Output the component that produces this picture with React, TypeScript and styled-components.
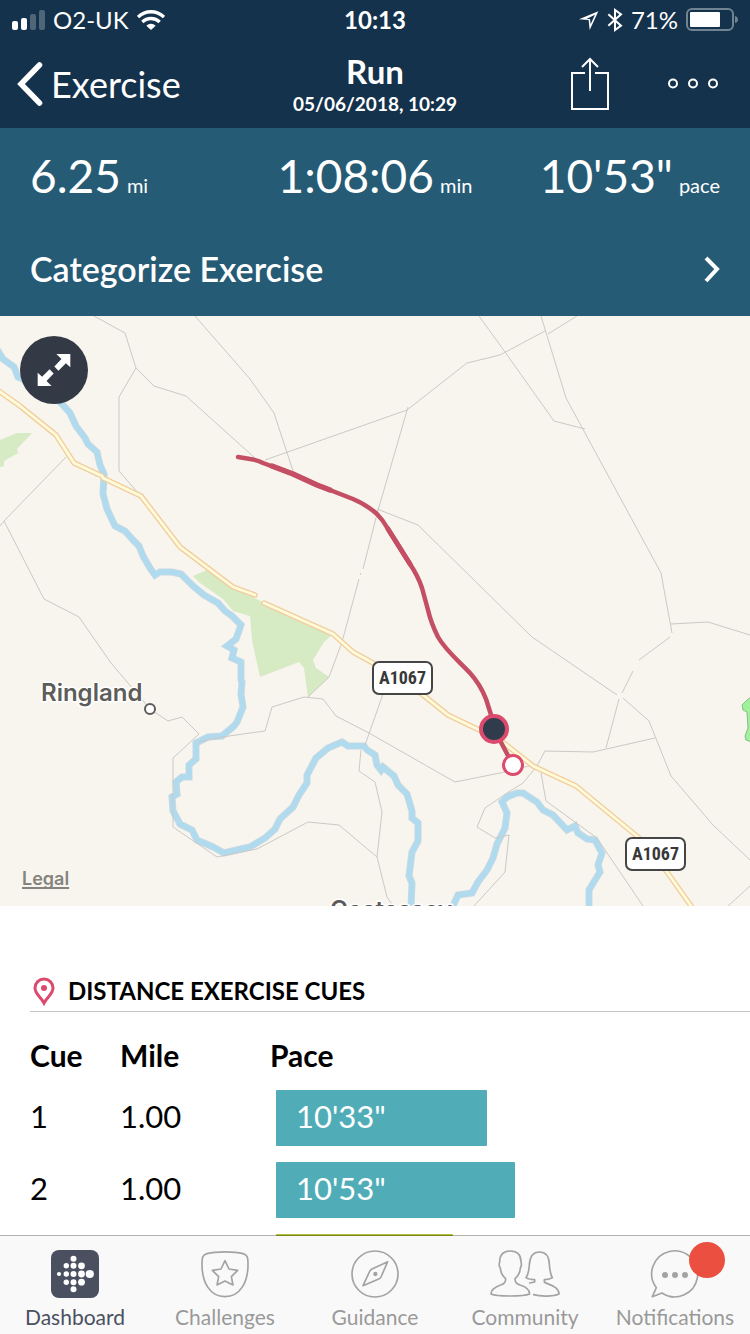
import React from "react";
import styled, { createGlobalStyle } from "styled-components";

const GlobalStyle = createGlobalStyle`
  *, *::before, *::after { box-sizing: border-box; }
  body {
    margin: 0;
    background: #fff;
    font-family: Lato, "Open Sans", sans-serif;
    color: #000;
  }
  button { font: inherit; color: inherit; background: none; border: 0; padding: 0; cursor: pointer; }
  svg { display: block; flex: none; }
`;

const Screen = styled.div`
  height: 100vh;
  display: flex;
  flex-direction: column;
  overflow: hidden;
`;

const TopBar = styled.header`
  background: #14324b;
  color: #fff;
  flex: none;
`;

const StatusBar = styled.div`
  display: grid;
  grid-template-columns: 1fr auto 1fr;
  align-items: center;
  height: 40px;
  padding: 0 12px;
  font-size: 24px;
  line-height: 40px;
`;

const StatusGroup = styled.div<{ $end?: boolean }>`
  display: flex;
  align-items: center;
  justify-content: ${(p) => (p.$end ? "flex-end" : "flex-start")};
  gap: 8px;
`;

const Clock = styled.time`
  font-weight: 700;
`;

const NavBar = styled.div`
  display: grid;
  grid-template-columns: 1fr auto 1fr;
  align-items: center;
  height: 88px;
  padding: 0 30px 0 16px;
`;

const BackButton = styled.button`
  display: flex;
  align-items: center;
  justify-self: start;
  gap: 8px;
  font-size: 36px;
  line-height: 44px;
`;

const TitleBlock = styled.div`
  text-align: center;
  margin-left: 14px;
`;

const Title = styled.h1`
  margin: 0;
  font-size: 33px;
  line-height: 40px;
  font-weight: 700;
`;

const Subtitle = styled.div`
  font-size: 19px;
  line-height: 26px;
  font-weight: 700;
`;

const NavActions = styled.div`
  display: flex;
  align-items: center;
  justify-content: flex-end;
  gap: 58px;
`;

const IconButton = styled.button`
  display: flex;
`;

const Summary = styled.section`
  flex: none;
  background: #265b75;
  color: #fff;
  padding: 18px 30px 0;
  height: 188px;
`;

const Stats = styled.div`
  display: grid;
  grid-template-columns: 1fr auto 1fr;
`;

const Stat = styled.div`
  display: flex;
  align-items: baseline;
  gap: 6px;
  line-height: 60px;

  &:last-child {
    justify-content: flex-end;
  }
`;

const StatValue = styled.span`
  font-size: 46px;
`;

const StatUnit = styled.span`
  font-size: 20px;
`;

const CategorizeButton = styled.button`
  display: flex;
  align-items: center;
  justify-content: space-between;
  width: 100%;
  margin-top: 32px;
  font-size: 34px;
  line-height: 44px;
  font-weight: 600;
`;

const Scroller = styled.main`
  flex: 1;
  min-height: 0;
  margin-bottom: -1px;
  overflow-y: auto;
  scrollbar-width: none;
`;

const MapPanel = styled.section`
  position: relative;
  height: 590px;
  background: #f8f5ee;
  overflow: hidden;
`;

const ExpandButton = styled.button`
  position: absolute;
  left: 20px;
  top: 20px;
  width: 68px;
  height: 68px;
  border-radius: 50%;
  background: #343a45;
  display: flex;
  align-items: center;
  justify-content: center;
`;

const LegalLink = styled.a`
  position: absolute;
  left: 22px;
  bottom: 14px;
  font-family: Inter, sans-serif;
  font-size: 18px;
  line-height: 26px;
  font-weight: 600;
  color: #85837e;
  text-decoration-thickness: 2px;
  text-decoration-skip-ink: none;
  text-underline-offset: 2px;
`;

const Cues = styled.section`
  padding: 65px 0 0 30px;
`;

const CuesTitle = styled.h2`
  display: flex;
  align-items: center;
  gap: 10px;
  margin: 0;
  height: 41px;
  border-bottom: 1px solid #c4c4c4;
  font-size: 24px;
  line-height: 40px;
  font-weight: 700;
`;

const CueTable = styled.table`
  width: 100%;
  border-collapse: collapse;
  table-layout: fixed;
`;

const HeadCell = styled.th<{ $width?: number }>`
  width: ${(p) => (p.$width ? `${p.$width}px` : "auto")};
  height: 70px;
  padding: 18px 0 2px;
  text-align: left;
  font-size: 30px;
  line-height: 50px;
  font-weight: 700;
`;

const Cell = styled.td`
  height: 72px;
  padding: 0 0 4px;
  font-size: 31px;
`;

const PaceCell = styled(Cell)`
  padding: 0 30px 0 6px;
`;

const PaceBar = styled.div<{ $color: string }>`
  height: 56px;
  padding-left: 20px;
  border-radius: 1px;
  background: ${(p) => p.$color};
  color: #fff;
  line-height: 52px;
`;

const TabBar = styled.nav`
  position: relative;
  flex: none;
  display: grid;
  grid-template-columns: repeat(5, 1fr);
  height: 99px;
  border-top: 1px solid rgba(0, 0, 0, 0.3);
  background: #f9f9f9;
  background-clip: padding-box;
`;

const Tab = styled.button<{ $active?: boolean }>`
  display: flex;
  flex-direction: column;
  align-items: center;
  gap: 4px;
  padding-top: 14px;
  font-size: 21px;
  line-height: 30px;
  color: ${(p) => (p.$active ? "#4a5060" : "#999")};
`;

const TabIcon = styled.span`
  position: relative;
  display: block;
`;

const Badge = styled.span`
  position: absolute;
  left: 38px;
  top: -8px;
  width: 36px;
  height: 36px;
  border-radius: 50%;
  background: #eb4f3f;
`;

const SignalIcon = () => (
  <svg width="33" height="20" fill="#fff" aria-hidden="true">
    <rect x="0" y="11" width="6" height="9" rx="2" />
    <rect x="9" y="8" width="6" height="12" rx="2" />
    <rect x="18" y="4" width="6" height="16" rx="2" opacity="0.25" />
    <rect x="27" y="0" width="6" height="20" rx="2" opacity="0.25" />
  </svg>
);

const WifiIcon = () => (
  <svg width="28" height="20" viewBox="0 0 84 60" fill="none" stroke="#fff" strokeWidth="10" aria-hidden="true">
    <path d="M3 21 C25 0 59 0 81 21" />
    <path d="M16 36 C30 22 54 22 68 36" />
    <path d="M28 47 C36 39 48 39 56 47 L42 60 Z" fill="#fff" stroke="none" />
  </svg>
);

const LocationIcon = () => (
  <svg width="20" height="20" viewBox="0 0 60 60" fill="#fff" fillRule="evenodd" aria-hidden="true">
    <path d="M0 28 L58 4 L32 60 L29 30 Z M22 27 L33 27 L35 43 L48 14 Z" />
  </svg>
);

const BluetoothIcon = () => (
  <svg width="16" height="24" viewBox="0 0 48 72" fill="none" stroke="#fff" strokeWidth="6" aria-hidden="true">
    <path d="M4 19 L42 53 L24 66 V6 L42 19 L4 53" />
  </svg>
);

const BatteryIcon = () => (
  <svg width="52" height="24" aria-hidden="true">
    <rect x="1" y="1" width="46" height="21" rx="5" fill="none" stroke="#718492" strokeWidth="2" />
    <rect x="4" y="4" width="30" height="15" rx="1" fill="#fff" />
    <path d="M49 8 C53 9 53 14 49 15 Z" fill="#718492" />
  </svg>
);

const BackChevron = () => (
  <svg width="27" height="44" fill="none" stroke="#fff" strokeWidth="5.5" strokeLinecap="round" aria-hidden="true">
    <path d="M23.500 3 L5 22 L23.500 41" />
  </svg>
);

const ShareIcon = () => (
  <svg width="38" height="54" fill="none" stroke="#fff" strokeWidth="2" aria-hidden="true">
    <path d="M14 16 H1 V52 H37 V16 H24" />
    <path d="M19 34 V2 M11 10 L19 2 L27 10" />
  </svg>
);

const MoreIcon = () => (
  <svg width="53" height="12" fill="none" stroke="#fff" strokeWidth="2" aria-hidden="true">
    <circle cx="6" cy="5.500" r="4" />
    <circle cx="26" cy="5.500" r="4" />
    <circle cx="46" cy="5.500" r="4" />
  </svg>
);

const ForwardChevron = () => (
  <svg width="17" height="28" fill="none" stroke="#fff" strokeWidth="4" aria-hidden="true">
    <path d="M3 3 L14 14 L3 26" />
  </svg>
);

const ExpandIcon = () => (
  <svg width="34" height="34" viewBox="0 0 100 100" fill="#fff" aria-hidden="true">
    <path d="M57 3 H98 V42 L85 30 L63 52 L51 40 L72 18 Z" />
    <path d="M43 97 H2 V58 L15 70 L37 48 L49 60 L28 82 Z" />
  </svg>
);

const PinIcon = () => (
  <svg width="28" height="30" fill="none" stroke="#dc4a6d" strokeWidth="3" aria-hidden="true">
    <path d="M14 27 C11 21 5 18 5 12 A9 9 0 0 1 23 12 C23 18 17 21 14 27 Z" />
    <circle cx="14" cy="12" r="3" fill="#dc4a6d" stroke="none" />
  </svg>
);

const DashboardIcon = () => (
  <svg width="48" height="48" fill="#fff" aria-hidden="true">
    <rect width="48" height="48" rx="8" fill="#4a5060" />
    <circle cx="8" cy="24" r="2.1" />
    {[15.8, 24, 32.2].map((y) => (
      <circle key={y} cx="15.3" cy={y} r="2.7" />
    ))}
    {[8.8, 15.8, 24, 32.2, 39.2].map((y) => (
      <circle key={y} cx="22.5" cy={y} r="3" />
    ))}
    {[15.8, 24, 32.2].map((y) => (
      <circle key={y} cx="30.5" cy={y} r="3.4" />
    ))}
    <circle cx="38.800" cy="24" r="4.1" />
  </svg>
);

const LineIcon = styled.svg.attrs({ "aria-hidden": true })`
  fill: none;
  stroke: #a3a3a3;
  stroke-width: 5;
  stroke-linejoin: round;
  stroke-linecap: round;
  overflow: visible;
`;

const ChallengesIcon = () => (
  <LineIcon width="48" height="48" viewBox="0 0 144 144">
    <path d="M3 44 C3 20 5 15 18 11 C44 4 100 4 126 11 C139 15 141 20 141 44 C141 96 118 140 72 140 C26 140 3 96 3 44 Z" />
    <path d="M72 32 L84 57 L110 61 L91 80 L96 105 L72 93 L48 105 L53 80 L34 61 L60 57 Z" />
  </LineIcon>
);

const GuidanceIcon = () => (
  <LineIcon width="48" height="48" viewBox="0 0 144 144">
    <circle cx="72" cy="72" r="69" />
    <path d="M36 107 L56 64 Q58 60 63 57 L110 35 L90 81 Q88 85 83 87 Z" />
    <circle cx="73" cy="72" r="4" fill="#a3a3a3" />
  </LineIcon>
);

const CommunityIcon = () => (
  <LineIcon width="70" height="48" viewBox="0 0 210 144">
    <path d="M3 132 C3 118 18 110 32 105 C42 101 47 98 47 86 C37 78 32 68 31 54 C26 48 27 42 29 36 C29 14 40 3 61 3 C82 3 93 14 93 36 C95 42 95 48 91 54 C90 68 85 78 75 86 C75 98 80 101 90 105 C106 110 119 118 119 132 C100 140 20 140 3 132 Z" />
    <path d="M119 99 L134 96 V89 C124 89 114 87 108 83 C116 73 117 60 118 44 C120 16 132 6 148 6 C166 6 177 18 178 42 C179 60 182 74 187 83 C180 87 172 89 163 89 V96 C170 102 184 104 192 110 C203 116 207 124 207 132 C190 140 150 140 131 134" />
  </LineIcon>
);

const NotificationsIcon = () => (
  <LineIcon width="48" height="48" viewBox="0 0 144 144">
    <path d="M33 129 L4 140 L16 113 A69 69 0 1 1 33 129 Z" />
    <g fill="#a3a3a3" stroke="none">
      <circle cx="42" cy="75" r="9" />
      <circle cx="72" cy="75" r="9" />
      <circle cx="102" cy="75" r="9" />
    </g>
  </LineIcon>
);

const RIVERS = [
  "M-4 32 L0 38 L3 43 L14 51 L18 61 L40 70 L62 88 L70 97 L76 110 L85 122 L88 128 L97 136 L100 149 L104 158 L103 178 L107 193 L115 210 L125 215 L134 225 L139 230 L143 240 L150 252 L155 259 L160 256 L172 256 L181 258 L193 270 L204 279 L218 287 L225 295 L232 300 L241 309 L236 323 L227 330 L234 334 L232 342 L241 346 L241 364 L242 366 L241 378 L243 391 L237 406 L234 410 L222 420 L208 421 L196 427 L196 443 L189 449 L189 461 L182 461 L176 466 L177 478 L172 481 L173 495 L180 508 L192 514 L197 524 L213 531 L224 537 L241 533 L250 531 L265 522 L275 513 L280 503 L293 491 L299 479 L307 467 L307 459 L316 442 L328 432 L342 426 L348 430 L364 430 L367 434 L375 439 L377 449 L381 454 L383 451 L394 460 L398 469 L407 478 L412 495 L412 502 L418 507 L418 525 L412 536 L409 560 L412 567 L411 592",
  "M452 592 L458 579 L472 577 L478 566 L487 554 L493 542 L497 528 L505 512 L507 497 L502 486 L507 481 L517 477 L523 477 L537 486 L543 494 L553 499 L567 514 L575 510 L578 517 L587 523 L595 524 L602 537 L598 549 L600 556 L595 564 L589 574 L589 592",
];

const MINOR_ROADS = [
  "M94 0 L125 17 L136 52 L154 70 L186 80 L256 143",
  "M136 52 L119 81 V155 L139 178",
  "M195 0 L250 63 L274 97 L293 155",
  "M66 141 L4 205 L0 210",
  "M4 205 L44 283 L79 301 L111 347 L150 393 L168 405 L182 401 L199 418 L173 442 V511 L217 541 L257 533 L308 506 L339 509 L377 541 L387 581 L393 590",
  "M377 541 L382 496 L375 466 L359 455 L361 434",
  "M199 426 L222 421 L250 417 L265 415 L272 391 L304 381 L323 383 L336 400 L369 417 L455 466 L500 457 L533 449",
  "M308 381 L329 361 L342 326 L359 263",
  "M360 259 L361 257",
  "M363 253 L377 198 L408 91",
  "M383 378 L365 429",
  "M265 144 L407 94 L467 47 L500 39 L545 15",
  "M548 18 L577 0",
  "M479 0 L500 29 L554 105 L585 113",
  "M541 0 L566 82 L661 257 L672 317",
  "M671 308 L708 306 L750 319",
  "M670 321 L639 344",
  "M633 355 L622 377",
  "M617 379 L532 321 L418 209 L377 193",
  "M623 382 L649 405 L671 460 L713 509 L750 544",
  "M619 383 L606 432",
  "M655 422 L593 436 L545 435 L537 450 L523 467 L507 477 L485 492 L477 511 L495 522 L509 519 L505 556 L474 590",
  "M541 457 L546 485 L597 522 L643 590",
  "M728 590 L750 570",
];

const PARKS = [
  "M0 124 L17 117 L32 117 L17 133 L18 137 L4 145 L4 150 L0 151 Z",
  "M193 260 L207 254 L233 271 L264 287 L333 318 L324 326 L313 344 L316 352 L329 361 L308 381 L304 352 L299 346 L260 361 L252 324 L250 300 L233 295 L223 283 L200 267 Z",
];

const MAIN_ROADS = [
  "M-4 73 L20 90 L56 119 L74 147 L102 160 L103 162 L141 180 L180 231 L233 271 L255 279",
  "M264 287 L333 318 L353 336 L373 347 L423 379 L448 399 L500 424 L533 450 L576 470 L638 521 L667 556 L694 594",
];

const RoadShield = ({ x, y, name }: { x: number; y: number; name: string }) => (
  <g transform={`translate(${x} ${y})`}>
    <rect x="1" y="1" width="59" height="32" rx="6" fill="#fff" stroke="#454545" strokeWidth="2" />
    <text
      x="30.5"
      y="23"
      textAnchor="middle"
      fontFamily='"Liberation Sans Narrow", "Roboto Condensed", Roboto, sans-serif'
      fontSize="18"
      fontWeight="700"
      fill="#383838"
    >
      {name}
    </text>
  </g>
);

const PlaceName = styled.text`
  font-family: Inter, sans-serif;
  font-size: 24px;
  font-weight: 600;
  fill: #5d5c59;
  stroke: #fff;
  stroke-width: 3px;
  stroke-linejoin: round;
  paint-order: stroke;
`;

const RouteMap = () => (
  <svg width="100%" height="100%" viewBox="0 0 750 590" preserveAspectRatio="xMidYMid slice" role="img" aria-label="Route map">
    {PARKS.map((d) => (
      <path key={d} d={d} fill="#d6eac4" />
    ))}
    <path d="M752 380 L746 385 L742 389 L743 394 L747 396 L748 412 L745 420 L746 424 L752 426 Z" fill="#a0f09c" stroke="#7fc282" />
    <g fill="none" strokeLinejoin="miter">
      {RIVERS.map((d) => (
        <g key={d}>
          <path d={d} stroke="#c3d9e6" strokeWidth="7" />
          <path d={d} stroke="#b0daed" strokeWidth="5" />
        </g>
      ))}
      {MINOR_ROADS.map((d) => (
        <path key={d} d={d} stroke="#cbc9c5" strokeWidth="1" />
      ))}
      <g strokeLinecap="round" strokeLinejoin="round">
        {MAIN_ROADS.map((d) => (
          <g key={d}>
            <path d={d} stroke="#f1ce9e" strokeWidth="5.500" />
            <path d={d} stroke="#fffbdb" strokeWidth="2.800" />
          </g>
        ))}
      </g>
    </g>
    <RoadShield x={372} y={345} name="A1067" />
    <RoadShield x={625} y={521} name="A1067" />
    <PlaceName x="41" y="385">Ringland</PlaceName>
    <PlaceName x="330" y="602">Costessey</PlaceName>
    <circle cx="150" cy="393" r="5" fill="#fff" stroke="#5d5c59" strokeWidth="2" />
    <g fill="none" stroke="#c44e63" strokeLinecap="round" strokeLinejoin="round">
      <path
        strokeWidth="4.500"
        d="M238 141 L250 143 Q257 144 263 147 L293 158 L317 169 L353 183 Q367 189 377 198 Q383 204 388 213 L410 248 Q418 260 422 272 L428 294 Q431 307 438 321 C446 335 460 346 470 357 Q480 368 486 383 L492 402 L494 413 L513 449"
      />
      <path strokeWidth="5.500" d="M272 150 L293 158 L317 169 L330 174" />
      <path strokeWidth="5" d="M388 213 L410 248" />
    </g>
    <circle cx="494" cy="413" r="13" fill="#303c4c" stroke="#dc4a6d" strokeWidth="4" />
    <circle cx="513" cy="449" r="9.500" fill="#fff" stroke="#dc4a6d" strokeWidth="3" />
  </svg>
);

type Cue = { id: number; mile?: string; pace?: string; share: number; color: string };

const CUES: Cue[] = [
  { id: 1, mile: "1.00", pace: "10'33\"", share: 47.5, color: "#50adb8" },
  { id: 2, mile: "1.00", pace: "10'53\"", share: 53.8, color: "#50adb8" },
  { id: 3, share: 39.9, color: "#b2bf33" },
];

const TABS = [
  { label: "Dashboard", icon: <DashboardIcon />, active: true },
  { label: "Challenges", icon: <ChallengesIcon /> },
  { label: "Guidance", icon: <GuidanceIcon /> },
  { label: "Community", icon: <CommunityIcon /> },
  { label: "Notifications", icon: <NotificationsIcon />, badge: true },
];

const STATS = [
  { value: "6.25", unit: "mi" },
  { value: "1:08:06", unit: "min" },
  { value: "10'53\"", unit: "pace" },
];

export default function App() {
  return (
    <Screen>
      <GlobalStyle />
      <TopBar>
        <StatusBar>
          <StatusGroup>
            <SignalIcon />
            <span>O2-UK</span>
            <WifiIcon />
          </StatusGroup>
          <Clock>10:13</Clock>
          <StatusGroup $end>
            <LocationIcon />
            <BluetoothIcon />
            <span>71%</span>
            <BatteryIcon />
          </StatusGroup>
        </StatusBar>
        <NavBar>
          <BackButton type="button">
            <BackChevron />
            Exercise
          </BackButton>
          <TitleBlock>
            <Title>Run</Title>
            <Subtitle>05/06/2018, 10:29</Subtitle>
          </TitleBlock>
          <NavActions>
            <IconButton type="button" aria-label="Share">
              <ShareIcon />
            </IconButton>
            <IconButton type="button" aria-label="More options">
              <MoreIcon />
            </IconButton>
          </NavActions>
        </NavBar>
      </TopBar>
      <Summary>
        <Stats>
          {STATS.map((s) => (
            <Stat key={s.unit}>
              <StatValue>{s.value}</StatValue>
              <StatUnit>{s.unit}</StatUnit>
            </Stat>
          ))}
        </Stats>
        <CategorizeButton type="button">
          Categorize Exercise
          <ForwardChevron />
        </CategorizeButton>
      </Summary>
      <Scroller>
        <MapPanel>
          <RouteMap />
          <ExpandButton type="button" aria-label="Expand map">
            <ExpandIcon />
          </ExpandButton>
          <LegalLink href="#legal">Legal</LegalLink>
        </MapPanel>
        <Cues>
          <CuesTitle>
            <PinIcon />
            DISTANCE EXERCISE CUES
          </CuesTitle>
          <CueTable>
            <thead>
              <tr>
                <HeadCell scope="col" $width={90}>Cue</HeadCell>
                <HeadCell scope="col" $width={150}>Mile</HeadCell>
                <HeadCell scope="col">Pace</HeadCell>
              </tr>
            </thead>
            <tbody>
              {CUES.map((cue) => (
                <tr key={cue.id}>
                  <Cell>{cue.pace && cue.id}</Cell>
                  <Cell>{cue.mile}</Cell>
                  <PaceCell>
                    <PaceBar $color={cue.color} style={{ width: `${cue.share}%` }}>
                      {cue.pace}
                    </PaceBar>
                  </PaceCell>
                </tr>
              ))}
            </tbody>
          </CueTable>
        </Cues>
      </Scroller>
      <TabBar>
        {TABS.map((tab) => (
          <Tab key={tab.label} type="button" $active={tab.active} aria-current={tab.active ? "page" : undefined}>
            <TabIcon>
              {tab.icon}
              {tab.badge && <Badge />}
            </TabIcon>
            {tab.label}
          </Tab>
        ))}
      </TabBar>
    </Screen>
  );
}
